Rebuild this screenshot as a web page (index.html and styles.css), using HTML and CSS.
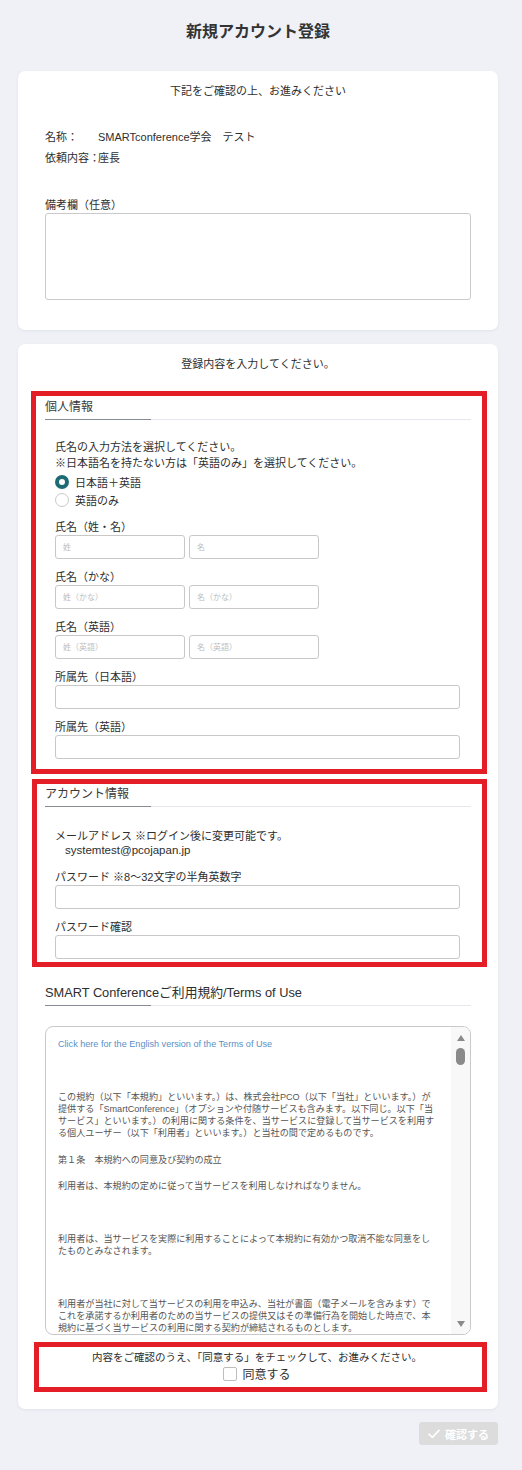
FILE: index.html
```html
<!DOCTYPE html>
<html lang="ja">
<head>
<meta charset="utf-8">
<title>新規アカウント登録</title>
<link rel="stylesheet" href="styles.css">
</head>
<body>
<main class="page">
  <h1 class="page-title">新規アカウント登録</h1>

  <section class="card card--summary">
    <p class="card-lead">下記をご確認の上、お進みください</p>
    <dl class="summary">
      <dt>名称：</dt><dd>SMARTconference学会　テスト</dd>
      <dt>依頼内容：</dt><dd>座長</dd>
    </dl>
    <label class="note-label" for="note">備考欄（任意）</label>
    <textarea class="note" id="note"></textarea>
  </section>

  <section class="card card--form">
    <p class="card-lead">登録内容を入力してください。</p>

    <div class="hl-box hl-box--personal">
      <h2 class="section-title">個人情報</h2>
      <div class="section-body">
        <p class="instructions">氏名の入力方法を選択してください。<br>※日本語名を持たない方は「英語のみ」を選択してください。</p>
        <div class="radios">
          <label class="radio"><span class="radio-dot is-checked"></span>日本語＋英語</label>
          <label class="radio"><span class="radio-dot"></span>英語のみ</label>
        </div>
        <div class="field">
          <div class="field-label">氏名（姓・名）</div>
          <div class="field-row">
            <input class="input input--half" placeholder="姓">
            <input class="input input--half" placeholder="名">
          </div>
        </div>
        <div class="field">
          <div class="field-label">氏名（かな）</div>
          <div class="field-row">
            <input class="input input--half" placeholder="姓（かな）">
            <input class="input input--half" placeholder="名（かな）">
          </div>
        </div>
        <div class="field">
          <div class="field-label">氏名（英語）</div>
          <div class="field-row">
            <input class="input input--half" placeholder="姓（英語）">
            <input class="input input--half" placeholder="名（英語）">
          </div>
        </div>
        <div class="field">
          <div class="field-label">所属先（日本語）</div>
          <input class="input input--full">
        </div>
        <div class="field">
          <div class="field-label">所属先（英語）</div>
          <input class="input input--full">
        </div>
      </div>
    </div>

    <div class="hl-box hl-box--account">
      <h2 class="section-title">アカウント情報</h2>
      <div class="section-body">
        <p class="email-label">メールアドレス ※ログイン後に変更可能です。</p>
        <p class="email-value">systemtest@pcojapan.jp</p>
        <div class="field field--password">
          <div class="field-label">パスワード ※8〜32文字の半角英数字</div>
          <input class="input input--full" type="password">
        </div>
        <div class="field">
          <div class="field-label">パスワード確認</div>
          <input class="input input--full" type="password">
        </div>
      </div>
    </div>

    <h2 class="section-title terms-title">SMART Conferenceご利用規約/Terms of Use</h2>
    <div class="terms-box">
      <div class="terms-content">
        <p><a class="terms-link" href="#">Click here for the English version of the Terms of Use</a></p>
        <p class="blank">&nbsp;</p>
        <p>この規約（以下「本規約」といいます。）は、株式会社PCO（以下「当社」といいます。）が<br>提供する「SmartConference」（オプションや付随サービスも含みます。以下同じ。以下「当<br>サービス」といいます。）の利用に関する条件を、当サービスに登録して当サービスを利用す<br>る個人ユーザー（以下「利用者」といいます。）と当社の間で定めるものです。</p>
        <p>第１条　本規約への同意及び契約の成立</p>
        <p>利用者は、本規約の定めに従って当サービスを利用しなければなりません。</p>
        <p class="blank">&nbsp;</p>
        <p>利用者は、当サービスを実際に利用することによって本規約に有効かつ取消不能な同意をし<br>たものとみなされます。</p>
        <p class="blank">&nbsp;</p>
        <p>利用者が当社に対して当サービスの利用を申込み、当社が書面（電子メールを含みます）で<br>これを承諾するか利用者のための当サービスの提供又はその準備行為を開始した時点で、本<br>規約に基づく当サービスの利用に関する契約が締結されるものとします。</p>
      </div>
      <div class="terms-scrollbar" aria-hidden="true">
        <span class="sb-arrow sb-arrow--up"></span>
        <span class="sb-thumb"></span>
        <span class="sb-arrow sb-arrow--down"></span>
      </div>
    </div>

    <div class="hl-box agree">
      <p class="agree-text">内容をご確認のうえ、「同意する」をチェックして、お進みください。</p>
      <label class="agree-check"><span class="checkbox"></span>同意する</label>
    </div>
  </section>

  <div class="actions">
    <button class="btn-confirm" type="button" disabled>
      <svg class="btn-icon" width="12" height="10" viewBox="0 0 12 10" aria-hidden="true"><polyline points="1,5.2 4.3,8.4 11,1.4" fill="none" stroke="#fff" stroke-width="1.6" stroke-linecap="round" stroke-linejoin="round"/></svg>
      確認する
    </button>
  </div>
</main>
</body>
</html>
```

FILE: styles.css
```css
* { box-sizing: border-box; }

body {
  margin: 0;
  background: #eff1f6;
  font-family: "Liberation Sans", "Noto Sans CJK JP", sans-serif;
  color: #2e2e2e;
}

.page {
  width: 480px;
  margin-left: 18px;
  padding: 20px 0 26px;
}

.page-title {
  margin: 0;
  font-size: 16px;
  line-height: 24px;
  font-weight: 700;
  text-align: center;
  color: #333;
}

.card {
  background: #fff;
  border-radius: 7px;
  box-shadow: 0 1px 3px rgba(30, 40, 80, 0.07);
  padding: 12px 27px 30px;
}

.card--summary { margin-top: 27px; }

.card--form {
  margin-top: 14px;
  padding: 12px 27px 17px;
}

.card-lead {
  margin: 0;
  font-size: 11px;
  line-height: 16px;
  text-align: center;
}

.summary {
  display: grid;
  grid-template-columns: 53px auto;
  margin: 28px 0 0;
  font-size: 11px;
  line-height: 21px;
}
.summary dt, .summary dd { margin: 0; white-space: nowrap; }

.note-label {
  display: block;
  margin-top: 28px;
  font-size: 11px;
  line-height: 16px;
}

.note {
  display: block;
  width: 100%;
  height: 87px;
  border: 1px solid #cacaca;
  border-radius: 3px;
  resize: none;
}

/* highlighted (red framed) blocks */
.hl-box {
  border: 5px solid #e41e26;
  margin: 0 -16px 0 -14px;
  padding: 3px 11px 10px 9px;
}

.hl-box--personal { margin-top: 19px; }

.hl-box--account {
  margin-top: 5px;
  margin-left: -13px;
  padding: 2px 11px 3px 8px;
}

.section-title {
  position: relative;
  margin: 0;
  padding-bottom: 4px;
  border-bottom: 1px solid #e6e8ed;
  font-size: 12px;
  line-height: 16px;
  font-weight: normal;
  color: #3a3a3a;
}
.section-title::after {
  content: "";
  position: absolute;
  left: 0;
  bottom: -1px;
  width: 106px;
  height: 1px;
  background: #868b96;
}

.section-body { padding: 0 11px 0 10px; }

.instructions {
  margin: 19px 0 0;
  font-size: 11px;
  line-height: 16px;
}

.radios { margin-top: 2px; }

.radio {
  display: flex;
  align-items: center;
  gap: 6px;
  height: 18px;
  font-size: 11px;
}

.radio-dot {
  width: 14px;
  height: 14px;
  border-radius: 50%;
  border: 1px solid #c9c9c9;
  background: #fff;
}
.radio-dot.is-checked { border: 4px solid #1d6b75; }

.field { margin-top: 11px; }

.field-label {
  font-size: 11px;
  line-height: 14px;
  margin-bottom: 1px;
}

.field-row {
  display: flex;
  gap: 4px;
}

.input {
  display: block;
  height: 24px;
  border: 1px solid #c8c8c8;
  border-radius: 3px;
  padding: 0 7px;
  font-family: inherit;
  font-size: 8px;
  background: #fff;
}
.input::placeholder { color: #bdbdbd; }
.input--half { width: 130px; }
.input--full { width: 100%; }

.email-label {
  margin: 22px 0 0;
  font-size: 11px;
  line-height: 14px;
}
.email-value {
  margin: 0;
  padding-left: 10px;
  font-size: 11.5px;
  line-height: 14px;
}
.field--password { margin-top: 13px; }

/* terms */
.terms-title {
  margin-top: 18px;
  font-size: 12.8px;
  color: #2e2e2e;
}

.terms-box {
  display: flex;
  height: 309px;
  margin-top: 20px;
  border: 1px solid #c9c9c9;
  border-radius: 8px;
  overflow: hidden;
}

.terms-content {
  flex: 1;
  overflow: hidden;
  padding: 11px 0 0 12px;
  font-size: 9.1px;
  line-height: 12px;
  color: #555;
}
.terms-content p {
  margin: 0 0 14.5px;
  white-space: nowrap;
}
.terms-link {
  color: #5b8fc6;
  text-decoration: none;
}

.terms-scrollbar {
  width: 19px;
  background: #f8f8f8;
  display: flex;
  flex-direction: column;
  align-items: center;
  padding: 8px 0 7px;
}
.sb-arrow {
  width: 0;
  height: 0;
  border-left: 4.5px solid transparent;
  border-right: 4.5px solid transparent;
}
.sb-arrow--up { border-bottom: 6px solid #8a8a8a; }
.sb-arrow--down { border-top: 6px solid #8a8a8a; margin-top: auto; }
.sb-thumb {
  width: 9px;
  height: 17px;
  margin-top: 7px;
  border-radius: 5px;
  background: #8a8a8a;
}

/* agreement */
.agree {
  display: flex;
  flex-direction: column;
  align-items: center;
  margin: 7px -16px 0 -11px;
  padding: 3px 7px 5px 0;
}
.agree-text {
  margin: 0;
  font-size: 10.5px;
  line-height: 15px;
}
.agree-check {
  display: flex;
  align-items: center;
  gap: 5px;
  height: 17px;
  font-size: 12px;
}
.checkbox {
  width: 14px;
  height: 14px;
  border: 1px solid #bdbdbd;
  border-radius: 2px;
  background: #fff;
}

/* footer action */
.actions {
  display: flex;
  justify-content: flex-end;
  margin-top: 13px;
}
.btn-confirm {
  display: flex;
  align-items: center;
  justify-content: center;
  gap: 5px;
  width: 79px;
  height: 23px;
  border: 0;
  border-radius: 3px;
  background: #dcdcdc;
  color: #fff;
  font-family: inherit;
  font-size: 11px;
  font-weight: 700;
}
```
